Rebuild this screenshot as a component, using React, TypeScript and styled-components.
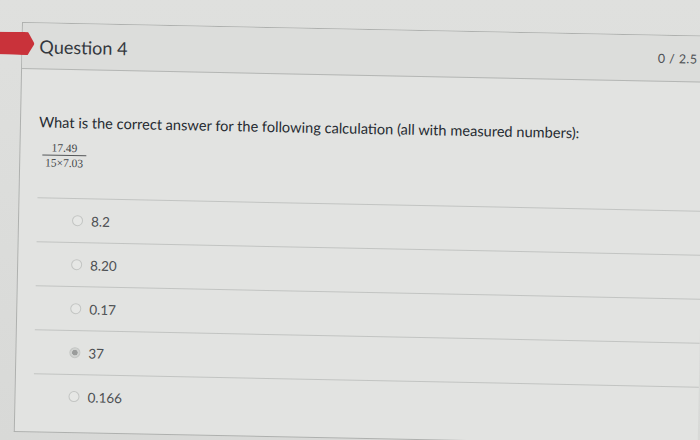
import React from 'react';
import styled, { createGlobalStyle } from 'styled-components';

const answers = ['8.2', '8.20', '0.17', '37', '0.166'];
const selected = '37';

const GlobalStyle = createGlobalStyle`
  html, body {
    margin: 0;
    padding: 0;
    width: 700px;
    height: 440px;
    overflow: hidden;
    background: #d9dad8;
    font-family: Lato, "Noto Sans", sans-serif;
  }
`;

export default function App() {
  return (
    <Page>
      <GlobalStyle />
      <Card>
        <Flag />
        <Header>
          <Title>Question 4</Title>
          <Points>0 / 2.5</Points>
        </Header>
        <Body>
          <Prompt>What is the correct answer for the following calculation (all with measured numbers):</Prompt>
          <Fraction>
            <Numer>17.49</Numer>
            <Denom>15×7.03</Denom>
          </Fraction>
          <Answers>
            {answers.map((a) => (
              <AnswerRow key={a}>
                <Radio $checked={a === selected} />
                <AnswerText>{a}</AnswerText>
              </AnswerRow>
            ))}
          </Answers>
        </Body>
      </Card>
    </Page>
  );
}

const Page = styled.div`
  width: 700px;
  height: 440px;
  padding: 22px 0 0 22px;
  box-sizing: border-box;
  background: linear-gradient(180deg, #dfe0de 0%, #d8d9d7 100%);
`;

const Card = styled.div`
  position: relative;
  width: 684px;
  height: 410px;
  box-sizing: border-box;
  border: 1px solid #aeb0ae;
  border-right: none;
  background: #e2e3e1;
  transform: rotate(1.15deg);
  transform-origin: 0 0;
`;

const Flag = styled.div`
  position: absolute;
  left: -30px;
  top: 9px;
  width: 42px;
  height: 23px;
  background: #c9323a;
  clip-path: polygon(0 0, 84% 0, 100% 50%, 84% 100%, 0 100%);
`;

const Header = styled.div`
  display: flex;
  align-items: center;
  justify-content: space-between;
  height: 45px;
  padding: 0 8px 0 17px;
  background: #dcdddb;
  border-bottom: 1px solid #b4b6b4;
`;

const Title = styled.h2`
  margin: 0;
  font-size: 18px;
  font-weight: 400;
  color: #34383e;
`;

const Points = styled.span`
  font-size: 12.5px;
  color: #4f5256;
  letter-spacing: 0.4px;
`;

const Body = styled.div`
  padding: 43px 0 0 18px;
`;

const Prompt = styled.p`
  margin: 0;
  font-size: 14.6px;
  line-height: 20px;
  color: #262b31;
`;

const Fraction = styled.div`
  display: inline-flex;
  flex-direction: column;
  align-items: center;
  margin: 9px 0 0 4px;
  font-family: "Liberation Serif", "DejaVu Serif", serif;
  font-size: 11.5px;
  color: #44474a;
  line-height: 12px;
`;

const Numer = styled.span`
  padding: 0 9px 1px;
  border-bottom: 1px solid #55585a;
`;

const Denom = styled.span`
  padding-top: 1px;
`;

const Answers = styled.ul`
  list-style: none;
  margin: 29px 0 0 0;
  padding: 0;
`;

const AnswerRow = styled.li`
  display: flex;
  align-items: center;
  gap: 8px;
  height: 43px;
  padding-left: 35px;
  border-top: 1px solid #c2c4c2;
`;

const Radio = styled.span<{ $checked: boolean }>`
  width: 11px;
  height: 11px;
  border-radius: 50%;
  box-sizing: border-box;
  border: 1px solid #c3c5c3;
  background: ${(p) => (p.$checked ? 'radial-gradient(circle, #9a9c9b 0 2.5px, #d0d2d0 3px)' : '#e6e7e5')};
`;

const AnswerText = styled.span`
  font-size: 13.5px;
  color: #4d5053;
`;
